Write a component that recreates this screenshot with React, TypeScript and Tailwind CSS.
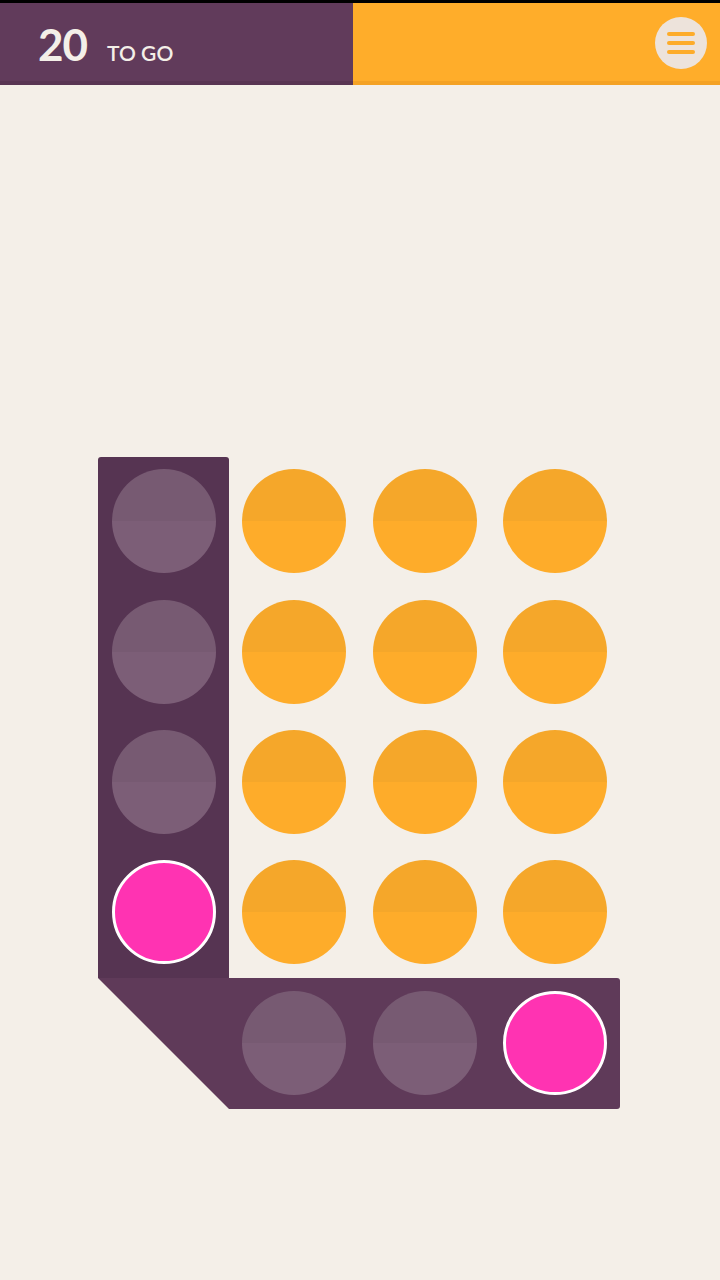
import React from "react";

type Kind = "orange" | "ghost" | "pink" | "none";

const Dot = ({ kind }: { kind: Kind }) => {
  if (kind === "none") return <div />;
  if (kind === "pink")
    return <div className="w-[104px] h-[104px] rounded-full bg-[#ff33b2] border-[3px] border-white" />;
  if (kind === "ghost")
    return <div className="w-[104px] h-[104px] rounded-full bg-[linear-gradient(to_bottom,#775a72_50%,#7c5e77_50%)]" />;
  return <div className="w-[104px] h-[104px] rounded-full bg-[linear-gradient(to_bottom,#f5a72a_50%,#feac2a_50%)]" />;
};

const rows: Kind[][] = [
  ["ghost", "orange", "orange", "orange"],
  ["ghost", "orange", "orange", "orange"],
  ["ghost", "orange", "orange", "orange"],
  ["pink", "orange", "orange", "orange"],
  ["none", "ghost", "ghost", "pink"],
];

export default function App() {
  return (
    <div className="w-[720px] h-[1280px] bg-[#f4efe8] flex flex-col font-['Lato',sans-serif] overflow-hidden">
      <div className="h-[3px] bg-black" />
      <div className="flex h-[82px]">
        <div className="w-[353px] bg-[#613b5b] border-b-[4px] border-[#593553] flex items-baseline pl-[38px] pt-[19px] gap-[20px]">
          <span className="text-[#f4efe8] text-[44px] font-bold leading-none tracking-[-1px]">20</span>
          <span className="text-[#f4efe8] text-[21px] font-semibold leading-none">TO GO</span>
        </div>
        <div className="flex-1 bg-[#ffad2a] border-b-[4px] border-[#f4a225] flex items-center justify-end pr-[13px]">
          <div className="w-[52px] h-[52px] rounded-full bg-[#ede3db] flex flex-col items-center justify-center gap-[5px] mt-[1px]">
            <div className="w-[28px] h-[4px] rounded-full bg-[#fdac2a]" />
            <div className="w-[28px] h-[4px] rounded-full bg-[#fdac2a]" />
            <div className="w-[28px] h-[4px] rounded-full bg-[#fdac2a]" />
          </div>
        </div>
      </div>
      <div className="pl-[98px] pt-[372px]">
        <div className="relative grid grid-cols-[131px_130px_131px_130px] grid-rows-[130px_131px_130px_130px_131px] w-[522px]">
          <div className="col-start-1 col-end-2 row-start-1 row-end-5 bg-[#563452] rounded-t-[3px]" />
          <div className="col-start-1 col-end-5 row-start-5 row-end-6 bg-[#5f3a59] rounded-r-[3px] [clip-path:polygon(0_0,100%_0,100%_100%,131px_100%)]" />
          {rows.map((r, ri) =>
            r.map((k, ci) => (
              <div
                key={`${ri}-${ci}`}
                className="relative z-10 flex items-center justify-center pb-[2px]"
                style={{ gridRow: ri + 1, gridColumn: ci + 1 }}
              >
                <Dot kind={k} />
              </div>
            ))
          )}
        </div>
      </div>
    </div>
  );
}
